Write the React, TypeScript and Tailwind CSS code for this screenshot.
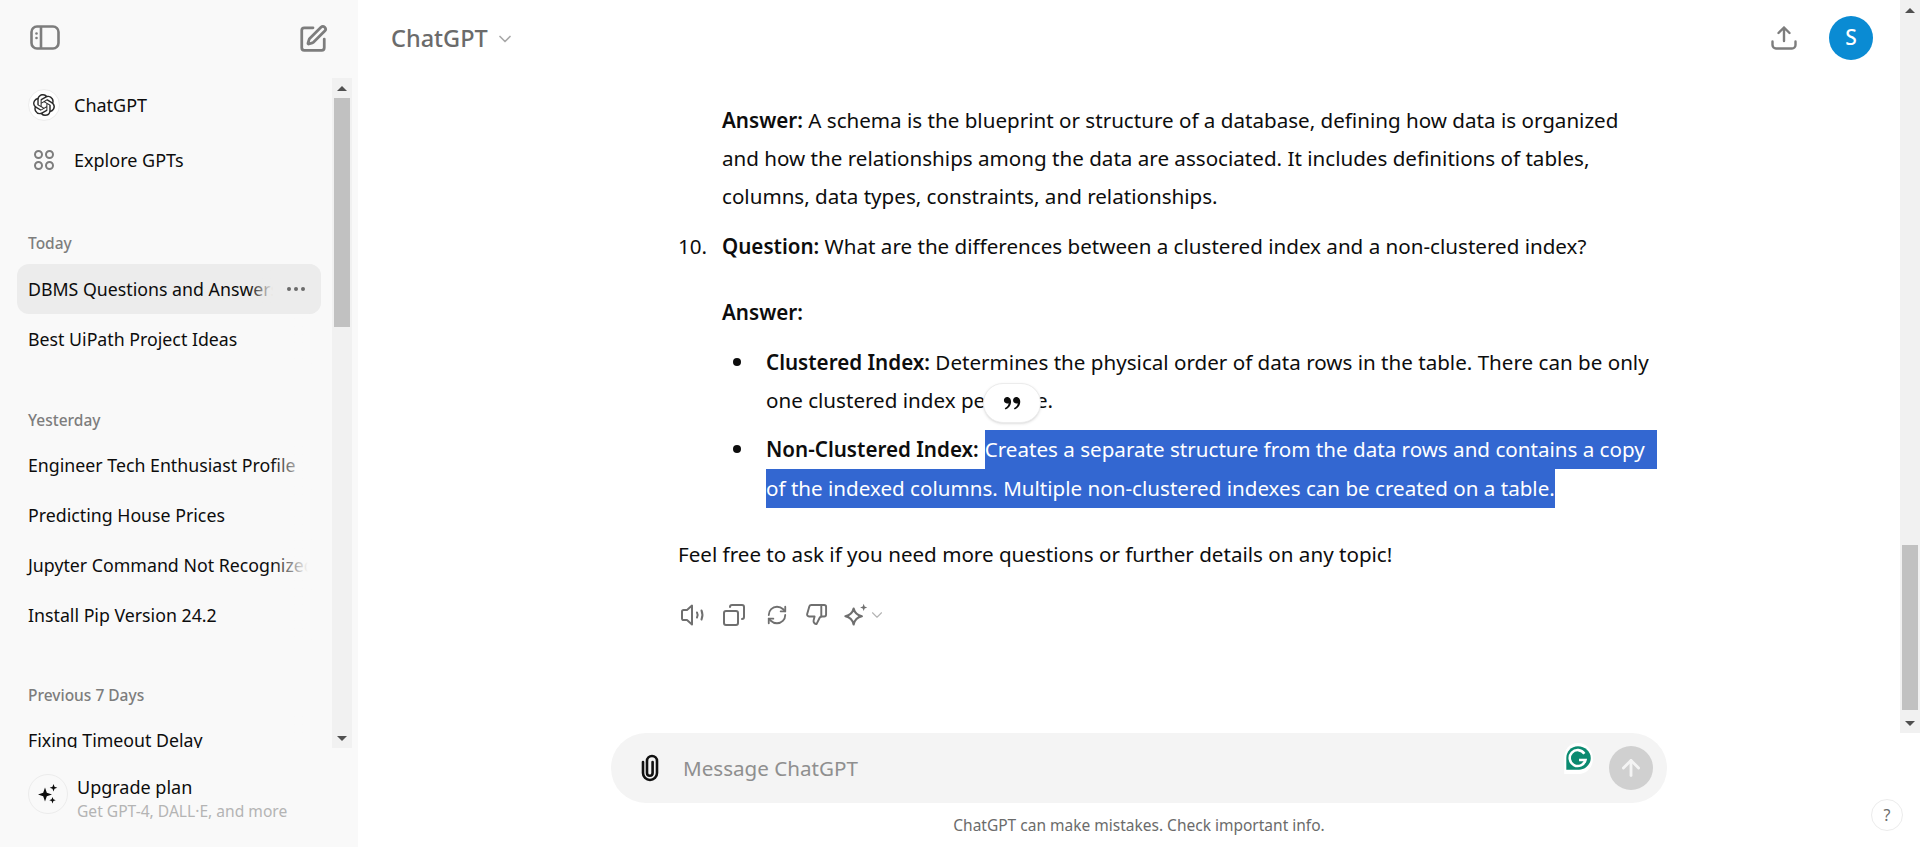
import React from "react"
import { ArrowUp, ChevronDown, Copy, RefreshCw, SquarePen, ThumbsDown } from "lucide-react"
import { RiDoubleQuotesR } from "react-icons/ri"
import { SiOpenai } from "react-icons/si"

const Scrollbar = ({ className, thumb }: { className: string; thumb: string }) => (
  <div className={`flex flex-col items-center bg-[#f1f1f1] ${className}`}>
    <div className="flex h-[20px] w-full shrink-0 items-center justify-center">
      <div className="h-0 w-0 border-x-[5px] border-b-[5px] border-x-transparent border-b-[#505050]" />
    </div>
    <div className="relative min-h-0 w-full flex-1">
      <div className={`absolute inset-x-[2px] bg-[#c1c1c1] ${thumb}`} />
    </div>
    <div className="flex h-[20px] w-full shrink-0 items-center justify-center">
      <div className="h-0 w-0 border-x-[5px] border-t-[5px] border-x-transparent border-t-[#505050]" />
    </div>
  </div>
)

const ChatRow = ({ title, active }: { title: string; active?: boolean }) => (
  <div className={`relative flex h-[50px] w-[304px] items-center overflow-hidden rounded-xl pl-[11px] ${active ? "bg-[#ececec]" : ""}`}>
    <span className="whitespace-nowrap text-[17.75px] text-[#0d0d0d]">{title}</span>
    {active ? (
      <>
        <div className="absolute inset-y-0 right-[48px] w-[24px] bg-gradient-to-r from-transparent to-[#ececec]" />
        <div className="absolute inset-y-0 right-0 flex w-[48px] items-center justify-start gap-[3px] bg-[#ececec] pl-[14px]">
          <i className="h-[4px] w-[4px] rounded-full bg-[#6b6b6b]" />
          <i className="h-[4px] w-[4px] rounded-full bg-[#6b6b6b]" />
          <i className="h-[4px] w-[4px] rounded-full bg-[#6b6b6b]" />
        </div>
      </>
    ) : (
      <>
        <div className="absolute inset-y-0 right-[13px] w-[36px] bg-gradient-to-r from-transparent to-[#f9f9f9]" />
        <div className="absolute inset-y-0 right-0 w-[13px] bg-[#f9f9f9]" />
      </>
    )}
  </div>
)

const Label = ({ text, className }: { text: string; className: string }) => (
  <div className={`h-[24px] pl-[28px] text-[15.5px] font-medium leading-[24px] text-[#7d7d7d] ${className}`}>{text}</div>
)

const Sidebar = () => (
  <aside className="flex h-full w-[358px] shrink-0 flex-col bg-[#f9f9f9]">
    <div className="flex h-[78px] shrink-0 items-start justify-between pl-[30px] pr-[30px] pt-[25px] text-[#7d7d7d]">
      <svg width="30" height="26" viewBox="0 0 30 26" fill="none" stroke="currentColor" strokeWidth="2.6">
        <rect x="1.5" y="1.5" width="27" height="22" rx="5.5" />
        <path d="M11 1.5v22" />
        <circle cx="6.5" cy="8.5" r="1.3" fill="currentColor" stroke="none" />
        <circle cx="6.5" cy="13" r="1.3" fill="currentColor" stroke="none" />
      </svg>
      <SquarePen size={30} strokeWidth={2.2} className="-mt-[1px]" />
    </div>

    <div className="flex h-[670px] shrink-0">
      <div className="min-w-0 flex-1 overflow-hidden pl-[17px] pt-[2px]">
        <div className="flex h-[50px] items-center pl-[11px]">
          <div className="flex h-[32px] w-[32px] items-center justify-center rounded-full border border-[#ededed] bg-white">
            <SiOpenai size={22} className="text-[#2b2b2b]" />
          </div>
          <span className="ml-[14px] text-[18px] text-[#0d0d0d]">ChatGPT</span>
        </div>
        <div className="mt-[5px] flex h-[50px] items-center pl-[11px]">
          <div className="grid h-[32px] w-[32px] grid-cols-2 place-content-center justify-items-center gap-x-[2px] gap-y-[2px] px-[6px]">
            <i className="h-[9px] w-[9px] rounded-full border-2 border-[#7d7d7d]" />
            <i className="h-[9px] w-[9px] rounded-full border-2 border-[#7d7d7d]" />
            <i className="h-[9px] w-[9px] rounded-full border-2 border-[#7d7d7d]" />
            <i className="h-[9px] w-[9px] rounded-full border-2 border-[#7d7d7d]" />
          </div>
          <span className="ml-[14px] text-[18px] text-[#0d0d0d]">Explore GPTs</span>
        </div>

        <div className="-ml-[17px]">
          <Label text="Today" className="mt-[46px]" />
        </div>
        <div className="mt-[9px]">
          <ChatRow title="DBMS Questions and Answers" active />
          <ChatRow title="Best UiPath Project Ideas" />
        </div>

        <div className="-ml-[17px]">
          <Label text="Yesterday" className="mt-[44px]" />
        </div>
        <div className="mt-[8px]">
          <ChatRow title="Engineer Tech Enthusiast Profile" />
          <ChatRow title="Predicting House Prices" />
          <ChatRow title="Jupyter Command Not Recognized" />
          <ChatRow title="Install Pip Version 24.2" />
        </div>

        <div className="-ml-[17px]">
          <Label text="Previous 7 Days" className="mt-[43px]" />
        </div>
        <div className="mt-[8px]">
          <ChatRow title="Fixing Timeout Delay" />
        </div>
      </div>
      <Scrollbar className="mr-[6px] h-full w-[20px] shrink-0" thumb="top-0 h-[229px]" />
    </div>

    <div className="flex flex-1 items-start pl-[28px] pt-[26px]">
      <div className="flex h-[40px] w-[40px] items-center justify-center rounded-full border border-[#ececec]">
        <svg width="22" height="22" viewBox="0 0 22 22" fill="#0d0d0d">
          <path d="M8 4.5l1.8 5.2 5.2 1.8-5.2 1.8L8 18.5l-1.8-5.2L1 11.5l5.2-1.8z" />
          <path d="M16.5 1l1 2.8 2.8 1-2.8 1-1 2.8-1-2.8-2.8-1 2.8-1z" />
          <path d="M15.5 14l.9 2.3 2.3.9-2.3.9-.9 2.4-.9-2.4-2.3-.9 2.3-.9z" />
        </svg>
      </div>
      <div className="ml-[9px]">
        <div className="text-[18px] leading-[26px] text-[#0d0d0d]">Upgrade plan</div>
        <div className="text-[15.6px] leading-[22px] text-[#b4b4b4]">Get GPT-4, DALL·E, and more</div>
      </div>
    </div>
  </aside>
)

const Actions = () => (
  <div className="mt-[28px] flex h-[26px] items-center text-[#6f6f6f]">
    <svg width="26" height="24" viewBox="0 0 26 24" fill="none" stroke="currentColor" strokeWidth="2" strokeLinecap="round" strokeLinejoin="round" className="ml-[2px]">
      <path d="M2 8.5c0-1 .7-1.6 1.6-1.6H7L12 2.6v18.8l-5-4.300H3.600C2.700 17.100 2 16.500 2 15.500z" />
      <path d="M17 9.500c.8 1.500.8 3.500 0 5" />
      <path d="M21.500 7.500c1.200 2.800 1.200 6.200 0 9" />
    </svg>
    <Copy size={24} strokeWidth={2} className="ml-[16px] -scale-x-100" />
    <RefreshCw size={22} strokeWidth={2} className="ml-[20px]" />
    <ThumbsDown size={23} strokeWidth={2} className="ml-[17px]" />
    <svg width="26" height="26" viewBox="2 1 22 22" fill="none" stroke="currentColor" strokeWidth="1.8" strokeLinejoin="round" className="ml-[15px]">
      <path d="M11 6.500c.9 3.900 2.700 5.700 7 6.500-4.300.8-6.100 2.700-7 7-.9-4.300-2.700-6.200-7-7 4.300-.8 6.100-2.600 7-6.500z" />
      <path d="M19.500 2.500l.8 2.300 2.200.8-2.200.8-.8 2.300-.8-2.300-2.200-.8 2.200-.8z" fill="currentColor" stroke="none" />
    </svg>
    <ChevronDown size={18} strokeWidth={1.5} className="-ml-[1px] text-[#b4b4b4]" />
  </div>
)

const Conversation = () => (
  <div className="mx-auto w-[1056px] pl-[77px] pt-[25px] text-[20.6px] leading-[38.75px] text-[#0d0d0d]">
    <div className="pl-[44px] leading-[38px]">
      <div><b className="font-semibold">Answer:</b> A schema is the blueprint or structure of a database, defining how data is organized</div>
      <div>and how the relationships among the data are associated. It includes definitions of tables,</div>
      <div>columns, data types, constraints, and relationships.</div>
    </div>
    <div className="mt-[12px] flex">
      <span className="w-[44px] shrink-0">10.</span>
      <div><b className="font-semibold">Question:</b> What are the differences between a clustered index and a non-clustered index?</div>
    </div>
    <div className="mt-[27px] pl-[44px] font-semibold">Answer:</div>
    <div className="relative mt-[11px] pl-[88px]">
      <i className="absolute left-[55px] top-[15px] h-[8px] w-[8px] rounded-full bg-[#0d0d0d]" />
      <div><b className="font-semibold">Clustered Index:</b> Determines the physical order of data rows in the table. There can be only</div>
      <div>one clustered index per table.</div>
      <div className="absolute left-[305px] top-[40px] flex h-[40px] w-[58px] items-center justify-center rounded-full border border-[#ececec] bg-white shadow-sm">
        <RiDoubleQuotesR size={22} className="text-[#0d0d0d]" />
      </div>
    </div>
    <div className="relative mt-[10px] pl-[88px]">
      <i className="absolute left-[55px] top-[15px] h-[8px] w-[8px] rounded-full bg-[#0d0d0d]" />
      <div className="flex whitespace-nowrap">
        <b className="mr-[6px] font-semibold">Non-Clustered Index:</b>
        <span className="block h-[39px] flex-1 bg-[#3367d1] text-white">Creates a separate structure from the data rows and contains a copy</span>
      </div>
      <div className="w-fit whitespace-nowrap bg-[#3367d1] text-white">of the indexed columns. Multiple non-clustered indexes can be created on a table.</div>
    </div>
    <div className="mt-[27px]">Feel free to ask if you need more questions or further details on any topic!</div>
    <Actions />
  </div>
)

const Composer = () => (
  <div className="flex h-[114px] shrink-0 flex-col items-center">
    <div className="flex h-[70px] w-[1056px] shrink-0 items-center rounded-full bg-[#f4f4f4] pl-[26px] pr-[14px]">
      <svg width="26" height="30" viewBox="0 0 26 30" fill="none" stroke="#111" strokeWidth="2.600" strokeLinecap="round">
        <path d="M6 9v11a7 7 0 0 0 14 0V8a5 5 0 0 0-10 0v12a2.800 2.800 0 0 0 5.600 0V9" />
      </svg>
      <span className="ml-[20px] flex-1 text-[20.6px] text-[#8f8f8f]">Message ChatGPT</span>
      <svg width="32" height="34" viewBox="0 0 30 32" className="-mt-[18px] mr-[15px]">
        <path d="M15 1C7 1 2 7 2 15v15h14c7 0 13-6 13-14S23 1 15 1z" fill="#fff" />
        <path d="M15 4C8.500 4 4 9 4 15v11h12c6 0 11-5 11-11S21.500 4 15 4z" fill="#0b8a70" />
        <path d="M21 11a7.500 7.500 0 1 0 1 6h-6" fill="none" stroke="#fff" strokeWidth="2.400" />
      </svg>
      <div className="flex h-[44px] w-[44px] items-center justify-center rounded-full bg-[#d0d0d0]">
        <ArrowUp size={26} strokeWidth={2.6} className="text-[#f4f4f4]" />
      </div>
    </div>
    <div className="mt-[11px] text-[15.5px] leading-[22px] text-[#6b6b6b]">ChatGPT can make mistakes. Check important info.</div>
  </div>
)

export default function App() {
  return (
    <div className="flex h-[847px] w-[1920px] overflow-hidden bg-white font-['Noto_Sans',sans-serif]">
      <Sidebar />
      <main className="relative flex min-w-0 flex-1 flex-col">
        <div className="flex h-[733px] shrink-0">
          <div className="min-w-0 flex-1 overflow-hidden">
            <header className="flex h-[76px] items-center justify-between pl-[33px] pr-[27px]">
              <div className="flex translate-y-[1px] items-center gap-[7px] text-[#6b6b6b]">
                <span className="text-[23.5px] font-medium">ChatGPT</span>
                <ChevronDown size={20} className="text-[#a8a8a8]" />
              </div>
              <div className="flex items-center gap-[31px]">
                <svg width="26" height="26" viewBox="0 0 26 26" fill="none" stroke="#7d7d7d" strokeWidth="2.400" strokeLinecap="round" strokeLinejoin="round" className="-translate-x-[1px]">
                  <path d="M13 16V2.500M7.500 8L13 2.500 18.500 8" />
                  <path d="M1.500 16.500v3.500a3.500 3.500 0 0 0 3.500 3.500h16a3.500 3.500 0 0 0 3.500-3.500v-3.500" />
                </svg>
                <div className="flex h-[44px] w-[44px] items-center justify-center rounded-full bg-[#0a8bd3] text-[21px] font-medium text-white">S</div>
              </div>
            </header>
            <Conversation />
          </div>
          <Scrollbar className="h-full w-[20px] shrink-0" thumb="bottom-[3px] h-[165px]" />
        </div>
        <Composer />
        <div className="absolute bottom-[16px] right-[17px] flex h-[32px] w-[32px] items-center justify-center rounded-full border border-[#ececec] text-[16px] text-[#6b6b6b]">?</div>
      </main>
    </div>
  )
}
